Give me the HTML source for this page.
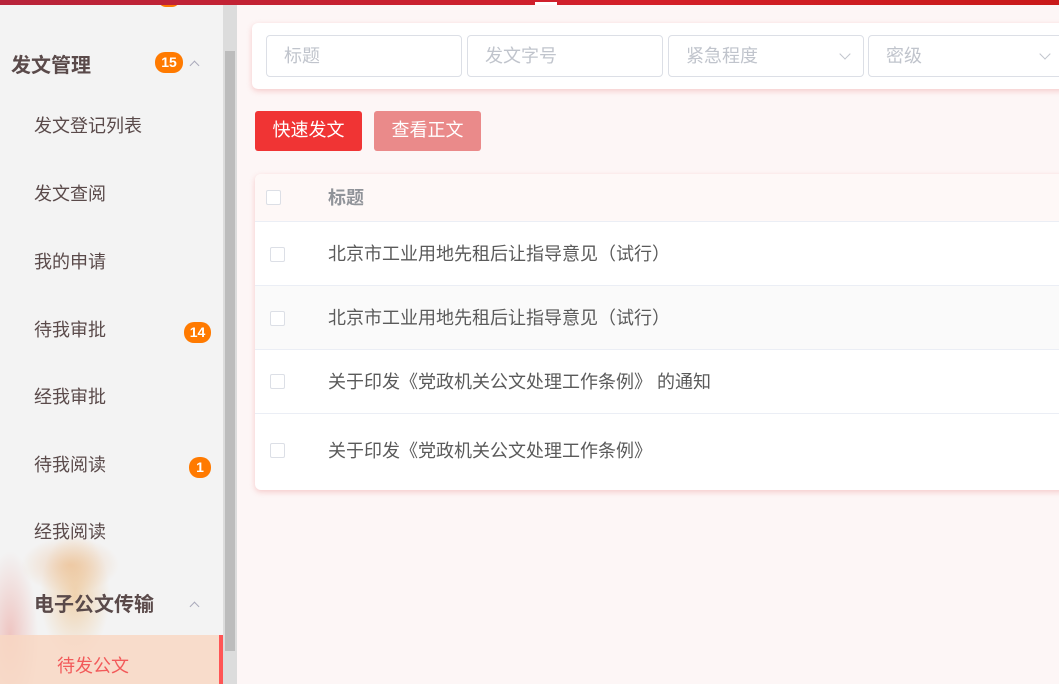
<!DOCTYPE html>
<html><head><meta charset="utf-8"><style>
*{margin:0;padding:0;box-sizing:border-box}
body{width:1059px;height:684px;overflow:hidden;background:#fdf6f6;font-family:"Liberation Sans","Noto Sans CJK SC",sans-serif;position:relative}
.top{position:absolute;left:0;top:0;width:1059px;height:5px;background:linear-gradient(90deg,#b8233a,#d4202a 60%,#c91a1a)}
.top i{position:absolute;left:535px;top:2px;width:22px;height:3px;background:#fff}
.side{position:absolute;left:0;top:5px;width:223px;height:679px;background:#f3f3f3;overflow:hidden}
.deco{position:absolute;left:0;top:470px;width:223px;height:214px;background:radial-gradient(ellipse 50px 90px at 75px 120px,rgba(235,170,90,.45),transparent 70%),radial-gradient(ellipse 70px 40px at 70px 90px,rgba(230,150,80,.35),transparent 70%),radial-gradient(ellipse 40px 120px at 10px 160px,rgba(230,110,100,.35),transparent 70%)}
.item{position:absolute;left:34px;font-size:18px;color:#5a4a4a}
.h{position:absolute;font-size:20px;font-weight:bold;color:#5a4a4a}
.badge{position:absolute;background:#ff7a00;color:#fff;font-size:14px;font-weight:bold;border-radius:10px;height:21px;line-height:21px;text-align:center}
.arr{position:absolute;width:7px;height:7px;border-left:1px solid #aab;border-top:1px solid #aab;transform:rotate(45deg)}
.active{position:absolute;left:0;top:635px;width:223px;height:49px;background:rgba(248,215,195,.85);border-right:4px solid #f55}
.active span{position:absolute;left:57px;top:17px;font-size:18px;color:#f25a5a}
.sb{position:absolute;left:223px;top:5px;width:14px;height:679px;background:#dcdcdc}
.sb i{position:absolute;left:2px;top:46px;width:10px;height:600px;background:#bcbcbc}
.card{position:absolute;left:252px;top:23px;width:820px;height:66px;background:#fff;border-radius:6px;box-shadow:0 2px 6px rgba(240,150,150,.45)}
.in{position:absolute;top:12px;height:42px;border:1px solid #dcdfe6;border-radius:4px;font-size:18px;color:#c0c4cc;padding:6px 17px}
.in .dd{position:absolute;right:14px;top:14px;width:8px;height:8px;border-right:1px solid #c0c4cc;border-bottom:1px solid #c0c4cc;transform:rotate(45deg)}
.btn{position:absolute;top:111px;height:40px;width:107px;border-radius:3px;color:#fff;font-size:18px;text-align:center;line-height:38px}
.tbl{position:absolute;left:255px;top:174px;width:820px;height:316px;background:#fff;border-radius:6px;box-shadow:0 2px 6px rgba(240,150,150,.45);overflow:hidden}
.row{position:absolute;left:0;width:820px;border-bottom:1px solid #ebeef5;font-size:18px;color:#5a5a5a}
.row span{position:absolute;left:73px}
.cb{position:absolute;left:15px;width:15px;height:15px;border:1px solid #dcdfe6;border-radius:2px;background:#fff}
</style></head><body>
<div class="side">
<div class="deco"></div>
<div class="badge" style="left:158px;top:-14px;width:22px;height:16px"></div>
<div class="h" style="left:11px;top:44px">发文管理</div>
<div class="badge" style="left:155px;top:47px;width:28px">15</div>
<div class="arr" style="left:191px;top:57px"></div>
<div class="item" style="top:107px">发文登记列表</div>
<div class="item" style="top:175px">发文查阅</div>
<div class="item" style="top:243px">我的申请</div>
<div class="item" style="top:311px">待我审批</div>
<div class="badge" style="left:184px;top:317px;width:27px">14</div>
<div class="item" style="top:378px">经我审批</div>
<div class="item" style="top:446px">待我阅读</div>
<div class="badge" style="left:189px;top:452px;width:22px">1</div>
<div class="item" style="top:513px">经我阅读</div>
<div class="h" style="left:34px;top:583px">电子公文传输</div>
<div class="arr" style="left:191px;top:598px"></div>
</div>
<div class="active"><span>待发公文</span></div>
<div class="sb"><i></i></div>
<div class="top"><i></i></div>
<div class="card">
<div class="in" style="left:14px;width:196px">标题</div>
<div class="in" style="left:215px;width:196px">发文字号</div>
<div class="in" style="left:416px;width:196px">紧急程度<i class="dd"></i></div>
<div class="in" style="left:616px;width:196px">密级<i class="dd"></i></div>
</div>
<div class="btn" style="left:255px;background:#f03434">快速发文</div>
<div class="btn" style="left:374px;background:#ea8a8a">查看正文</div>
<div class="tbl">
<div class="row" style="top:0;height:48px;background:#fef8f7;font-weight:bold;color:#909399"><i class="cb" style="left:11px;top:16px"></i><span style="top:10px">标题</span></div>
<div class="row" style="top:48px;height:64px"><i class="cb" style="top:25px"></i><span style="top:18px">北京市工业用地先租后让指导意见（试行）</span></div>
<div class="row" style="top:112px;height:64px;background:#fafafa"><i class="cb" style="top:25px"></i><span style="top:18px">北京市工业用地先租后让指导意见（试行）</span></div>
<div class="row" style="top:176px;height:64px"><i class="cb" style="top:24px"></i><span style="top:18px">关于印发《党政机关公文处理工作条例》 的通知</span></div>
<div class="row" style="top:240px;height:76px;border:0"><i class="cb" style="top:29px"></i><span style="top:23px">关于印发《党政机关公文处理工作条例》</span></div>
</div>
</body></html>
